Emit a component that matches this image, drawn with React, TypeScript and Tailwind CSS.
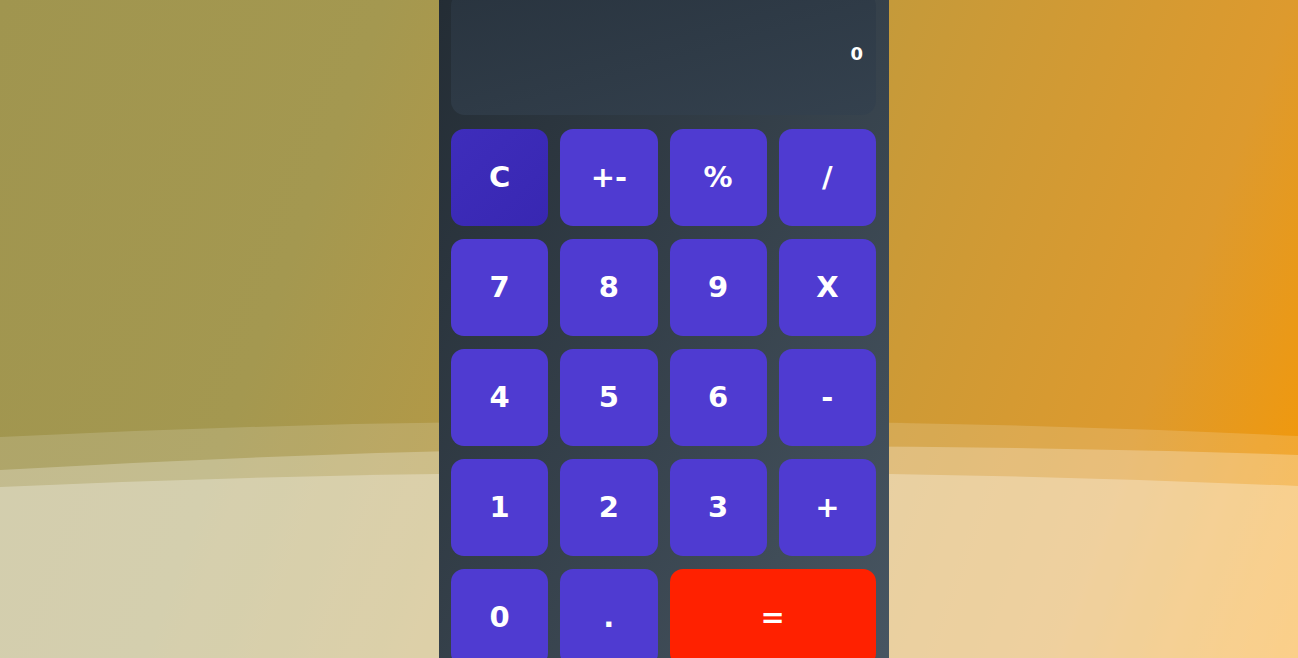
const keys: { label: string; tone?: "clear" | "equals"; wide?: boolean }[] = [
  { label: "C", tone: "clear" },
  { label: "+-" },
  { label: "%" },
  { label: "/" },
  { label: "7" },
  { label: "8" },
  { label: "9" },
  { label: "X" },
  { label: "4" },
  { label: "5" },
  { label: "6" },
  { label: "-" },
  { label: "1" },
  { label: "2" },
  { label: "3" },
  { label: "+" },
  { label: "0" },
  { label: "." },
  { label: "=", tone: "equals", wide: true },
];

function Waves() {
  return (
    <svg
      className="absolute inset-0 h-full w-full"
      viewBox="0 0 1298 658"
      preserveAspectRatio="none"
    >
      <path d="M0 437 Q649 405 1298 436 L1298 658 L0 658 Z" fill="#fff" fillOpacity="0.15" />
      <path d="M0 470 Q649 432 1298 455 L1298 658 L0 658 Z" fill="#fff" fillOpacity="0.25" />
      <path d="M0 487 Q649 458 1298 486 L1298 658 L0 658 Z" fill="#fff" fillOpacity="0.28" />
    </svg>
  );
}

function Key({ label, tone, wide }: { label: string; tone?: "clear" | "equals"; wide?: boolean }) {
  const color =
    tone === "clear"
      ? "bg-linear-to-br from-[#3e2dbb] to-[#3827b2]"
      : tone === "equals"
        ? "bg-[#ff2100]"
        : "bg-[#4f3bd1]";
  return (
    <button
      type="button"
      className={`${color} ${wide ? "col-span-2" : ""} flex h-[97px] items-center justify-center rounded-[13px] text-[29px] font-bold text-white`}
    >
      {label}
    </button>
  );
}

export default function App() {
  return (
    <div
      className="relative flex h-[658px] w-full items-center justify-center overflow-hidden bg-[linear-gradient(110deg,#a0954f_0%,#a49850_25%,#c59a3a_58%,#dd9a2e_84%,#f89800_100%)]"
      style={{ fontFamily: '"DejaVu Sans", "Open Sans", sans-serif' }}
    >
      <Waves />

      {/* calculator body */}
      <div className="relative ml-[30px] w-[450px] shrink-0 bg-linear-to-br from-[#232c34] to-[#485662] py-3 pl-3 pr-[13px]">
        <div className="mb-[14px] flex h-[123px] items-center justify-end rounded-[14px] bg-linear-to-br from-[#29343f] to-[#34414e] px-[13px]">
          <span className="text-[18px] font-bold text-white">0</span>
        </div>

        <div className="grid grid-cols-4 gap-x-3 gap-y-[13px]">
          {keys.map((k) => (
            <Key key={k.label} label={k.label} tone={k.tone} wide={k.wide} />
          ))}
        </div>
      </div>
    </div>
  );
}
